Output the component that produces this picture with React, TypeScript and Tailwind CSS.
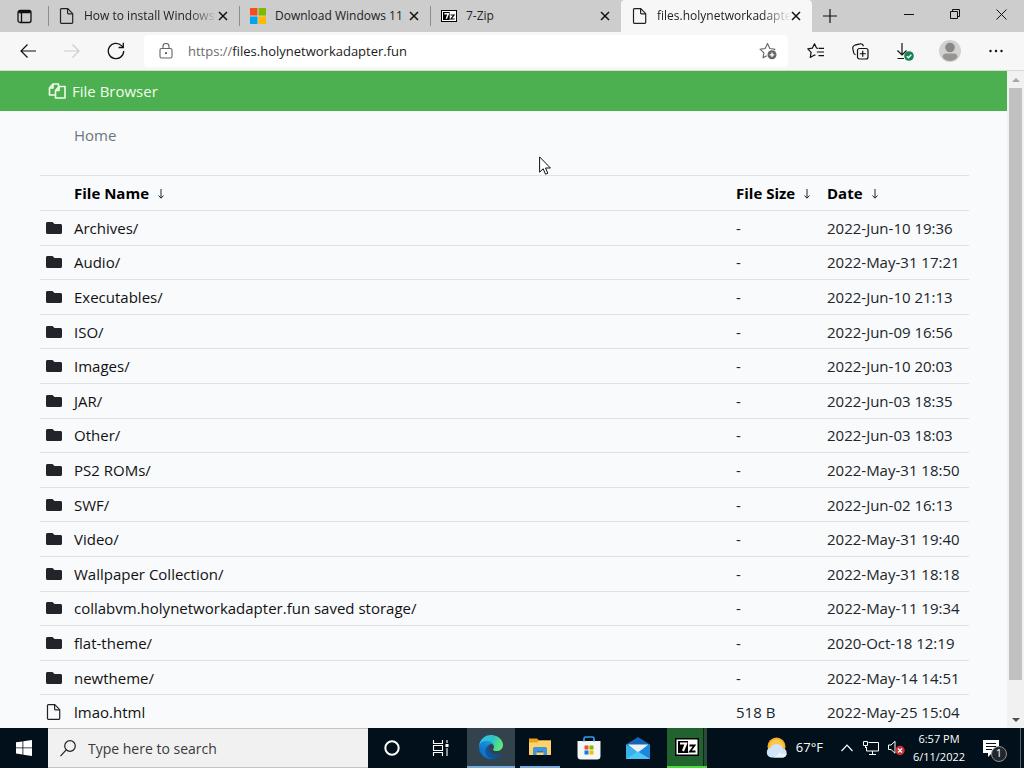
import React from 'react';
import { FaFolder } from 'react-icons/fa';

interface FileEntry {
  name: string;
  size: string;
  date: string;
}

const entries: FileEntry[] = [
  { name: 'Archives/', size: '-', date: '2022-Jun-10 19:36' },
  { name: 'Audio/', size: '-', date: '2022-May-31 17:21' },
  { name: 'Executables/', size: '-', date: '2022-Jun-10 21:13' },
  { name: 'ISO/', size: '-', date: '2022-Jun-09 16:56' },
  { name: 'Images/', size: '-', date: '2022-Jun-10 20:03' },
  { name: 'JAR/', size: '-', date: '2022-Jun-03 18:35' },
  { name: 'Other/', size: '-', date: '2022-Jun-03 18:03' },
  { name: 'PS2 ROMs/', size: '-', date: '2022-May-31 18:50' },
  { name: 'SWF/', size: '-', date: '2022-Jun-02 16:13' },
  { name: 'Video/', size: '-', date: '2022-May-31 19:40' },
  { name: 'Wallpaper Collection/', size: '-', date: '2022-May-31 18:18' },
  { name: 'collabvm.holynetworkadapter.fun saved storage/', size: '-', date: '2022-May-11 19:34' },
  { name: 'flat-theme/', size: '-', date: '2020-Oct-18 12:19' },
  { name: 'newtheme/', size: '-', date: '2022-May-14 14:51' },
  { name: 'lmao.html', size: '518 B', date: '2022-May-25 15:04' },
];

function PageIcon() {
  return (
    <svg width="16" height="16" viewBox="0 0 16 16" fill="none" stroke="#222" strokeWidth="1.2" strokeLinejoin="round">
      <path d="M2.300.6h6.500l4.900 5v9a.8.8 0 0 1-.8.8H2.300a.8.8 0 0 1-.8-.8V1.400a.8.8 0 0 1 .8-.8z" />
      <path d="M8.600.8V5a.8.8 0 0 0 .8.800h4.200" />
    </svg>
  );
}

function WindowsLogo() {
  return (
    <svg width="16" height="16" viewBox="0 0 16 16">
      <path fill="#f25022" d="M0 0h7.5v7.5H0z" />
      <path fill="#7fba00" d="M8.5 0H16v7.5H8.5z" />
      <path fill="#00a4ef" d="M0 8.5h7.5V16H0z" />
      <path fill="#ffb900" d="M8.5 8.5H16V16H8.5z" />
    </svg>
  );
}

// The 7-Zip mark: a black plate with the "7" and "z" as plain shapes
function SevenZipIcon({ width, height }: { width: number; height: number }) {
  return (
    <svg width={width} height={height} viewBox="0 0 24 18">
      <path fill="#000" d="M0 0h24v18H0z" />
      <path fill="#fff" d="M1.5 1.5h21v15h-21z" />
      <path fill="#000" d="M3 3h10v12H3z" />
      <path d="M5 5.5h6L8 13" fill="none" stroke="#fff" strokeWidth="2.2" />
      <path d="M14.5 7.5h5l-4.5 6h5.5" fill="none" stroke="#000" strokeWidth="1.8" />
    </svg>
  );
}

function CloseIcon() {
  return (
    <svg width="10" height="10" viewBox="0 0 10 10" stroke="#111" strokeWidth="1.5">
      <path d="M1 1l8 8M9 1L1 9" />
    </svg>
  );
}

interface TabProps {
  title: string;
  icon: React.ReactNode;
  active?: boolean;
  faded?: boolean;
}

function Tab({ title, icon, active, faded }: TabProps) {
  return (
    <div
      className={
        active
          ? 'flex h-full w-[191px] min-w-0 items-center rounded-t-sm bg-[#f7f7f7] pl-[11px] pr-[11px]'
          : 'relative flex h-full w-[191px] min-w-0 items-center pl-[11px] pr-[11px] before:absolute before:left-0 before:h-5 before:w-px before:bg-[#8d8d8d]'
      }
    >
      {icon}
      <button
        className={
          faded
            ? 'ml-[9px] min-w-0 flex-1 whitespace-nowrap text-left text-[12px] text-[#222] [mask-image:linear-gradient(to_right,#000_78%,transparent)]'
            : 'ml-[9px] min-w-0 flex-1 whitespace-nowrap text-left text-[12px] text-[#222]'
        }
      >
        {title}
      </button>
      <button aria-label={`Close ${title}`}>
        <CloseIcon />
      </button>
    </div>
  );
}

function TabStrip() {
  return (
    <div className="flex h-8 bg-[#cdcdcd]">
      <button aria-label="Tab actions" className="flex w-12 shrink-0 items-center justify-center">
        <svg width="15" height="15" viewBox="0 0 15 15" fill="none" stroke="#111" strokeWidth="1.3">
          <rect x="1" y="1.5" width="13" height="12" rx="2" />
          <path d="M1.5 3h12" strokeWidth="2.5" />
          <path d="M4.5 4v9" />
        </svg>
      </button>
      <Tab title="How to install Windows" icon={<PageIcon />} faded />
      <Tab title="Download Windows 11" icon={<WindowsLogo />} />
      <Tab title="7-Zip" icon={<SevenZipIcon width={16} height={12} />} />
      <Tab title="files.holynetworkadapte" icon={<PageIcon />} active faded />
      <button aria-label="New tab" className="flex w-9 shrink-0 items-center justify-center">
        <svg width="14" height="14" viewBox="0 0 14 14" stroke="#111" strokeWidth="1.2">
          <path d="M7 0v14M0 7h14" />
        </svg>
      </button>
      <div className="ml-auto flex shrink-0 pb-1">
        <button aria-label="Minimize" className="flex w-[46px] items-center justify-center">
          <svg width="10" height="10" viewBox="0 0 10 10" stroke="#111">
            <path d="M0 5.5h10" />
          </svg>
        </button>
        <button aria-label="Restore" className="flex w-[46px] items-center justify-center">
          <svg width="10" height="10" viewBox="0 0 10 10" fill="none" stroke="#111">
            <path d="M.5 2.5h7v7h-7zM2.5 2.5v-2h7v7h-2" />
          </svg>
        </button>
        <button aria-label="Close window" className="flex w-[46px] items-center justify-center">
          <svg width="11" height="11" viewBox="0 0 11 11" stroke="#111">
            <path d="M.5.5l10 10M10.500.5l-10 10" />
          </svg>
        </button>
      </div>
    </div>
  );
}

function Toolbar() {
  return (
    <div className="flex h-[39px] items-center border-b border-[#d5dccf] bg-[#f7f7f7] pl-1.5 pr-1">
      <button aria-label="Back" className="flex w-11 justify-center">
        <svg width="16" height="14" viewBox="0 0 16 14" fill="none" stroke="#111" strokeWidth="1.2">
          <path d="M16 7H1M7.500.5L1 7l6.500 6.500" />
        </svg>
      </button>
      <button aria-label="Forward" disabled className="flex w-11 justify-center">
        <svg width="16" height="14" viewBox="0 0 16 14" fill="none" stroke="#ccc" strokeWidth="1.2">
          <path d="M0 7h15M8.500.5L15 7l-6.500 6.500" />
        </svg>
      </button>
      <button aria-label="Refresh" className="flex w-11 justify-center">
        <svg width="18" height="18" viewBox="0 0 18 18" fill="none" stroke="#111" strokeWidth="1.3">
          <path d="M16.700 9a7.700 7.700 0 1 1-2.200-5.400l1.700 1.700" />
          <path d="M16.300.8v4.700h-4.700" />
        </svg>
      </button>
      <div className="ml-1.5 flex h-8 min-w-0 flex-1 items-center rounded-sm bg-white pl-[15px] pr-[11px]">
        <svg width="14" height="16" viewBox="0 0 14 16" fill="none" stroke="#666" strokeWidth="1.1">
          <rect x="1" y="5.500" width="12" height="9.500" rx="1.500" />
          <path d="M4 5.500V3.500a3 3 0 0 1 6 0v2" />
          <circle cx="7" cy="10.200" r=".6" fill="#666" />
        </svg>
        {/* the scheme is dimmed, so the editable field sits over a two-tone label */}
        <label className="relative ml-[15px] min-w-0 flex-1 pt-px text-[13px]">
          <span aria-hidden="true" className="text-[#1b1b1b]">
            <span className="text-[#6b6b6b]">https://</span>files.holynetworkadapter.fun
          </span>
          <input
            type="text"
            aria-label="Address"
            defaultValue="https://files.holynetworkadapter.fun"
            className="absolute inset-0 w-full text-transparent outline-none"
          />
        </label>
        <button aria-label="Add to favorites">
          <svg width="18" height="18" viewBox="0 0 18 18" fill="none" stroke="#666" strokeWidth="1.1" strokeLinejoin="round">
            <path d="M7.800 13.700L4 15.800l.9-5L1 7.200l5.200-.7L8.500 1.500l2.300 5 5.200.7-1 1" />
            <circle cx="13" cy="12.800" r="4.500" fill="#666" stroke="none" />
            <path d="M13 10.500v4.600M10.700 12.800h4.600" stroke="#fff" strokeWidth="1.300" />
          </svg>
        </button>
      </div>
      <button aria-label="Favorites" className="ml-1.5 flex w-11 justify-center">
        <svg width="18" height="16" viewBox="0 0 18 16" fill="none" stroke="#111" strokeWidth="1.2" strokeLinejoin="round">
          <path d="M11 5.300L9.500 5 7.500.8 5.300 5.200.8 5.900l3.300 3.400-.8 5.100 4.200-2.400.9.400" />
          <path d="M11.500 5.300H17M9.800 9H17M11.500 12.700H17" />
        </svg>
      </button>
      <button aria-label="Collections" className="flex w-11 justify-center">
        <svg width="17" height="17" viewBox="0 0 17 17" fill="none" stroke="#111" strokeWidth="1.2">
          <rect x="5.500" y="5.500" width="10.500" height="10.500" rx="2" />
          <path d="M3.600 11.800A3 3 0 0 1 1.600 9.500L.8 5.500a3 3 0 0 1 2-3.300L8 .9a2.500 2.500 0 0 1 3.300 2.300M10.750 7.800v6M7.800 10.750h6" />
        </svg>
      </button>
      <button aria-label="Downloads" className="flex w-[46px] justify-center">
        <svg width="18" height="19" viewBox="0 0 18 19" fill="none" stroke="#111" strokeWidth="1.2">
          <path d="M6 1v12M1.500 8.500L6 13 10.500 8.500M1.500 16.500H8" />
          <circle cx="13" cy="14" r="4.800" fill="#168354" stroke="none" />
          <path d="M10.800 14.100l1.600 1.600 2.900-3" stroke="#fff" strokeWidth="1.300" />
        </svg>
      </button>
      <button aria-label="Profile" className="flex w-11 justify-center">
        <svg width="22" height="22" viewBox="0 0 22 22">
          <circle cx="11" cy="11" r="11" fill="#d3d1cf" />
          <circle cx="11" cy="7.500" r="4.800" fill="#8a8886" />
          <path d="M3.500 17c0-2.500 2-3.500 3.500-3.500h8c1.500 0 3.500 1 3.500 3.500-1.500 2.500-4.500 4-7.500 4s-6-1.500-7.500-4z" fill="#979593" />
        </svg>
      </button>
      <button aria-label="Settings and more" className="flex w-12 justify-center">
        <svg width="14" height="4" viewBox="0 0 14 4" fill="#111">
          <circle cx="1.500" cy="2" r="1.200" />
          <circle cx="7" cy="2" r="1.200" />
          <circle cx="12.500" cy="2" r="1.200" />
        </svg>
      </button>
    </div>
  );
}

function ColumnHeader({ label }: { label: string }) {
  return (
    <th scope="col" className="px-1.5 text-left font-bold whitespace-nowrap text-black">
      {label}
      <a href="#" aria-label={`Sort by ${label}`} className="ml-2 inline-block">
        <svg width="8" height="10" viewBox="0 0 8 10" fill="none" stroke="#222">
          <path d="M4 0v9M1.500 6.500L4 9.200l2.500-2.700" />
        </svg>
      </a>
    </th>
  );
}

function FileTable() {
  return (
    <table className="h-[555px] w-full table-fixed border-collapse text-[15px] leading-6 text-[#212529]">
      <colgroup>
        <col className="w-7" />
        <col />
        <col className="w-[91px]" />
        <col className="w-[148px]" />
      </colgroup>
      <thead>
        <tr className="h-[35px] border-y border-[#dee2e6]">
          <td />
          <ColumnHeader label="File Name" />
          <ColumnHeader label="File Size" />
          <ColumnHeader label="Date" />
        </tr>
      </thead>
      <tbody>
        {entries.map((entry) => (
          <tr key={entry.name} className="border-b border-[#dee2e6]">
            <td className="pl-1.5">
              {entry.name.endsWith('/') ? <FaFolder size={16} color="#212529" /> : <PageIcon />}
            </td>
            <td className="px-1.5">
              <a href="#" className="text-[#111]">{entry.name}</a>
            </td>
            <td className="px-1.5">{entry.size}</td>
            <td className="px-1.5 whitespace-nowrap">{entry.date}</td>
          </tr>
        ))}
      </tbody>
    </table>
  );
}

function Scrollbar() {
  return (
    <div className="flex w-[17px] shrink-0 flex-col items-center bg-[#f1f1f1]">
      <button aria-label="Scroll up" className="flex h-[17px] items-center justify-center">
        <svg width="8" height="4" viewBox="0 0 8 4" fill="#a3a3a3">
          <path d="M0 4l4-4 4 4z" />
        </svg>
      </button>
      <div className="w-[13px] flex-[94] bg-[#c1c1c1]" />
      <div className="flex-[5]" />
      <button aria-label="Scroll down" className="flex h-[17px] items-center justify-center">
        <svg width="8" height="4" viewBox="0 0 8 4" fill="#505050">
          <path d="M0 0l4 4 4-4z" />
        </svg>
      </button>
    </div>
  );
}

function EdgeIcon() {
  return (
    <svg width="24" height="24" viewBox="0 0 256 256">
      <defs>
        <linearGradient id="edgeDark" x1="0" x2="1" y1="0.5" y2="0.5">
          <stop offset="0" stopColor="#0c59a4" />
          <stop offset="1" stopColor="#114a8b" />
        </linearGradient>
        <linearGradient id="edgeBlue" x1="0.6" x2="0.2" y1="0" y2="1">
          <stop offset="0" stopColor="#1b9de2" />
          <stop offset="0.6" stopColor="#0f74ca" />
          <stop offset="1" stopColor="#0078d4" />
        </linearGradient>
        <linearGradient id="edgeGreen" x1="0" x2="1" y1="0.3" y2="0.6">
          <stop offset="0" stopColor="#35c1f1" />
          <stop offset="0.5" stopColor="#2bc3c8" />
          <stop offset="1" stopColor="#66eb6e" />
        </linearGradient>
      </defs>
      <path fill="url(#edgeDark)" d="M235.7 195.5a93.700 93.700 0 0 1-10.600 4.700 101.900 101.900 0 0 1-35.900 6.400c-47.300 0-88.500-32.500-88.500-74.300a31.500 31.500 0 0 1 16.400-27.300c-42.800 1.800-53.800 46.400-53.800 72.500 0 74 68.100 81.400 82.800 81.400 7.900 0 19.800-2.300 27-4.600l1.300-.4a128.300 128.300 0 0 0 66.600-52.800 4 4 0 0 0-5.300-5.600z" />
      <path fill="url(#edgeBlue)" d="M105.700 241.400a79.200 79.200 0 0 1-22.700-21.300 80.700 80.700 0 0 1 29.500-120c3.200-1.500 8.500-4.100 15.600-4a32.400 32.400 0 0 1 25.700 13 31.900 31.900 0 0 1 6.300 18.700c0-.2 24.500-79.600-80-79.600-43.900 0-80 41.600-80 78.200a130.200 130.200 0 0 0 12.100 56 128 128 0 0 0 156.400 67 75.500 75.500 0 0 1-62.800-8z" />
      <path fill="url(#edgeGreen)" d="M152.300 148.900c-.9 1-3.300 2.500-3.300 5.700 0 2.600 1.700 5.100 4.700 7.200 14.400 10 41.500 8.700 41.600 8.700a59.600 59.600 0 0 0 30.300-8.300 61.400 61.400 0 0 0 30.400-52.900c.3-22.400-8-37.300-11.300-43.900C223.500 23.900 177.700 0 128 0A128 128 0 0 0 0 126.200c.5-36.500 36.800-66 80-66 3.500 0 23.500.3 42 10.100 16.300 8.600 24.900 18.900 30.800 29.200 6.200 10.700 7.300 24.100 7.300 29.500s-2.700 13.300-7.800 19.900z" />
    </svg>
  );
}

function Taskbar() {
  return (
    <div className="flex h-10 shrink-0 bg-[#01101a] text-white">
      <button aria-label="Start" className="flex w-12 shrink-0 items-center justify-center">
        <svg width="16" height="16" viewBox="0 0 16 16" fill="#fff">
          <path d="M0 2.300L6.500 1.400v6.100H0zM7.300 1.300L16 0v7.500H7.300zM0 8.300h6.500v6.200L0 13.600zM7.300 8.300H16V16l-8.700-1.300z" />
        </svg>
      </button>
      <label className="flex w-80 min-w-0 items-center gap-3 border-y border-[#c4c4c4] bg-[#f1f1f1] px-3">
        <svg width="16" height="17" viewBox="0 0 16 17" fill="none" stroke="#222" strokeWidth="1.2">
          <circle cx="10" cy="6" r="5.300" />
          <path d="M6.200 9.800L.5 16.200" />
        </svg>
        <input
          type="text"
          aria-label="Search"
          placeholder="Type here to search"
          className="min-w-0 flex-1 pt-px text-sm outline-none placeholder:text-[#3a3a3a]"
        />
      </label>
      <button aria-label="Cortana" className="flex w-12 items-center justify-center">
        <svg width="16" height="16" viewBox="0 0 16 16" fill="none" stroke="#fff" strokeWidth="2">
          <circle cx="8" cy="8" r="6.700" />
        </svg>
      </button>
      <button aria-label="Task view" className="flex w-12 items-center justify-center">
        <svg width="17" height="16" viewBox="0 0 17 16" fill="none" stroke="#fff" strokeWidth="1.1">
          <path d="M1.500 0v3.500h9V0M1.500 16v-3.500h9V16M1.500 5.500h9v5h-9zM15 0v3M15 8v8" />
          <path d="M13.500 4h3v3h-3z" fill="#fff" stroke="none" />
        </svg>
      </button>
      <div className="ml-[3px] flex gap-px">
        <button aria-label="Microsoft Edge" className="flex w-12 items-center justify-center border-b-2 border-[#76a9dc] bg-[#33434e]">
          <EdgeIcon />
        </button>
        <button aria-label="File Explorer" className="flex w-12 justify-center px-1">
          <span className="flex h-full w-10 items-center justify-center border-b-2 border-[#76a9dc]">
            <svg width="22" height="20" viewBox="0 0 22 20">
              <path fill="#e8a317" d="M0 1.500h8l2 2h12V18H0z" />
              <path fill="#ffd36b" d="M0 5.500h8l2-2h12V18H0z" />
              <path fill="#3f96dd" d="M4 11.500a1.500 1.500 0 0 1 1.500-1.500h11a1.500 1.500 0 0 1 1.500 1.500V18h-3.500v-4h-7v4H4z" />
              <path fill="#2474b8" d="M7.500 14h7v1.500h-7z" />
            </svg>
          </span>
        </button>
        <button aria-label="Microsoft Store" className="flex w-12 items-center justify-center">
          <svg width="24" height="24" viewBox="0 0 24 24">
            <path d="M7 6V2.500A1.500 1.500 0 0 1 8.500 1h7A1.500 1.500 0 0 1 17 2.500V6" fill="none" stroke="#3d9be5" strokeWidth="1.600" />
            <path d="M.5 5h23v15a3.500 3.500 0 0 1-3.500 3.500H4A3.500 3.500 0 0 1 .5 20z" fill="#f4f6f8" />
            <path d="M7 5.500V3.500M17 5.500V3.500" stroke="#3d9be5" strokeWidth="1.600" />
            <path fill="#f25022" d="M7.500 9.500h4v4h-4z" />
            <path fill="#7fba00" d="M12.500 9.500h4v4h-4z" />
            <path fill="#0f7fd4" d="M7.500 14.500h4v4h-4z" />
            <path fill="#ffb900" d="M12.500 14.500h4v4h-4z" />
          </svg>
        </button>
        <button aria-label="Mail" className="flex w-12 items-center justify-center">
          <svg width="24" height="22" viewBox="0 0 24 22">
            <path fill="#1565b5" d="M0 7.500L12 0l12 7.500-6 6H6z" />
            <path fill="#35b1ee" d="M0 7.500V22h24V7.500L12 15z" />
            <path fill="#e9f2fa" d="M1.500 7.500h21L12 15.500z" />
            <path fill="#1c87dc" d="M24 7.500V22L12 15.500z" />
            <path fill="#4cc8f7" d="M0 22l12-7.500L24 22z" />
          </svg>
        </button>
        <button aria-label="7-Zip" className="ml-1 flex w-10 border-b-2 border-[#4ad83c]">
          <span className="flex h-full flex-1 items-center justify-center bg-[#20632f] pl-1">
            <SevenZipIcon width={24} height={18} />
          </span>
          <span className="h-full w-1 border-l border-[#0d2616] bg-[#2b4a3c]" />
        </button>
      </div>
      <div className="ml-auto flex shrink-0 items-center">
        <button className="flex items-center gap-2 text-[13px]">
          <svg width="22" height="22" viewBox="0 0 22 22">
            <circle cx="10.500" cy="9.500" r="9" fill="#f7b02c" />
            <circle cx="10.500" cy="9.500" r="7" fill="#fcc64b" />
            <path d="M5.500 20.500a5 5 0 0 1-.6-9.900 6.300 6.300 0 0 1 11.700 1 4.500 4.500 0 0 1 .4 8.900z" fill="#cfe4f7" />
            <path d="M5.500 20.500c3 0 6-1.500 8-5.500 2 2 4.500 2.500 7 1.500a4.500 4.500 0 0 1-3.500 4z" fill="#eaf3fb" />
          </svg>
          67°F
        </button>
        <button aria-label="Show hidden icons" className="ml-4 flex w-4 justify-center">
          <svg width="12" height="8" viewBox="0 0 12 8" fill="none" stroke="#fff" strokeWidth="1.2">
            <path d="M.5 7L6 1.200 11.500 7" />
          </svg>
        </button>
        <button aria-label="Network" className="ml-2">
          <svg width="17" height="14" viewBox="0 0 17 14" fill="none" stroke="#fff">
            <path d="M5.500 1.500h10v8.500H3.500V6M9.500 10v3M6 13.500h7" />
            <path d="M.5.500h4v4h-4zM2.500 4.500V7" />
          </svg>
        </button>
        <button aria-label="Volume, muted" className="ml-2">
          <svg width="17" height="16" viewBox="0 0 17 16" fill="none">
            <path d="M.5 5h2.500L7 1.200v12L3 9.500H.5z" stroke="#fff" />
            <circle cx="12" cy="10.500" r="4.700" fill="#c93338" />
            <path d="M10 8.500l4 4M14 8.500l-4 4" stroke="#fff" strokeWidth="1.200" />
          </svg>
        </button>
        <button className="ml-1 flex w-[60px] flex-col items-center text-[11px] leading-[18px] whitespace-nowrap">
          <span>6:57 PM</span>
          <span>6/11/2022</span>
        </button>
        <button aria-label="1 new notification" className="relative mr-[13px] ml-3.5 flex w-6">
          <svg width="17" height="17" viewBox="0 0 17 17">
            <path d="M0 0h16v13H9l-4 4v-4H0z" fill="#fff" />
            <path d="M3 3.500h10M3 6.500h10M3 9.500h6" stroke="#01101a" />
          </svg>
          <span className="absolute top-1.5 left-2 flex size-4 items-center justify-center rounded-full border border-[#8b9298] bg-[#20272d] text-[11px]">
            1
          </span>
        </button>
        <div className="h-10 w-1 border-l border-[#5a646b]" />
      </div>
    </div>
  );
}

export default function App() {
  return (
    <div className="flex h-screen flex-col overflow-hidden bg-[#f8fafc] font-['Open_Sans',sans-serif]">
      <TabStrip />
      <Toolbar />
      <div className="flex min-h-0 flex-1">
        <main className="min-w-0 flex-1 overflow-hidden bg-[#f8fafc]">
          <header className="flex h-10 items-center gap-1.5 bg-[#4caf50] pl-12 text-[15px] text-[#f1fdec]">
            <svg width="18" height="16" viewBox="0 0 18 16" fill="none" stroke="#f1fdec" strokeWidth="1.600" strokeLinejoin="round">
              <path d="M7 12H1.500V5l3.500-4h5.500v2.500M1.500 5H5V1" />
              <path d="M7.500 7.500L11 3.500h6V15H7.500zM7.500 7.500H11v-4" />
            </svg>
            File Browser
          </header>
          <nav aria-label="Breadcrumb" className="flex h-12 items-center pl-[74px] text-[15px]">
            <a href="#" className="text-[#6c757d]">Home</a>
          </nav>
          <div className="pt-4 pr-[38px] pl-10">
            <FileTable />
          </div>
        </main>
        <Scrollbar />
      </div>
      <Taskbar />

      {/* mouse pointer */}
      <svg className="pointer-events-none absolute top-[156px] left-[539px]" width="12" height="20" viewBox="0 0 12 20">
        <path d="M.6.900v15.300l3.600-3.400 2.300 5.400 2.300-1-2.300-5.200h4.900z" fill="#fff" stroke="#111" />
      </svg>
    </div>
  );
}
